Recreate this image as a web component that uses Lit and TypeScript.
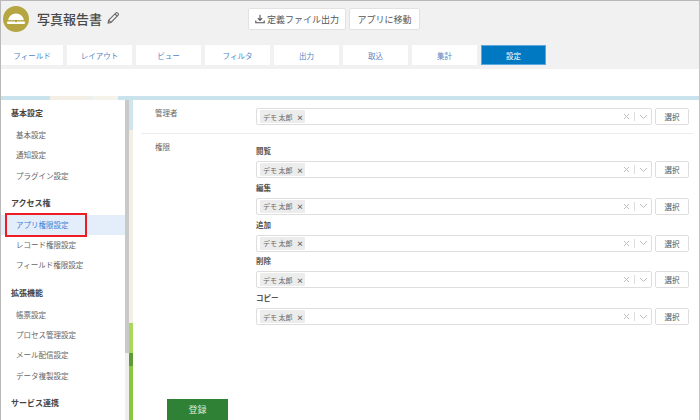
import { LitElement, html, css, svg } from "lit";
import { customElement } from "lit/decorators.js";

const TABS = ["フィールド", "レイアウト", "ビュー", "フィルタ", "出力", "取込", "集計", "設定"];
const NAV: { title: string; items: string[] }[] = [
  { title: "基本設定", items: ["基本設定", "通知設定", "プラグイン設定"] },
  { title: "アクセス権", items: ["アプリ権限設定", "レコード権限設定", "フィールド権限設定"] },
  { title: "拡張機能", items: ["帳票設定", "プロセス管理設定", "メール配信設定", "データ複製設定"] },
  { title: "サービス連携", items: [] },
];
const PERMS = ["閲覧", "編集", "追加", "削除", "コピー"];

@customElement("app-root")
export class AppRoot extends LitElement {
  static styles = css`
    :host {
      display: block;
      width: 700px;
      height: 420px;
      overflow: hidden;
      box-sizing: border-box;
      border-top: 1px solid #b9b9b9;
      border-left: 1px solid #b9b9b9;
      border-right: 1px solid #c4c4c4;
      font-family: "Noto Sans CJK JP", "Liberation Sans", sans-serif;
      font-size: 8px;
      color: #555;
      background: #fff;
    }
    .top { height: 68px; background: #f1f1f1; box-sizing: border-box; padding: 5px 0 0 2px; }
    .head { display: flex; align-items: flex-start; height: 39px; }
    .logo { width: 26px; height: 26px; flex: none; display: block; }
    .title { margin: 3px 0 0 8px; font-size: 13px; line-height: 20px; font-weight: 500; color: #4a4a4a; width: 64px; white-space: nowrap; }
    .pencil { width: 14px; height: 14px; margin: 5px 0 0 5px; flex: none; }
    .actions { display: flex; gap: 3px; margin: 2px 0 0 128px; }
    .btn {
      height: 22px; box-sizing: border-box; display: flex; align-items: center; justify-content: center;
      background: #fff; border: 1px solid #e2e2e2; border-radius: 2px; font-size: 9px; color: #555; white-space: nowrap;
    }
    .b1 { width: 98px; gap: 2px; }
    .b2 { width: 71px; }
    .dl { width: 10px; height: 10px; }
    .tabs { display: flex; gap: 4px; margin-left: -2px; }
    .tab {
      width: 65px; height: 20px; background: #fff; color: #4f86c6; display: flex; align-items: center; justify-content: center;
      font-size: 7.5px; box-sizing: border-box;
    }
    .tab:first-child { width: 62px; }
    .tab.on { background: #0079c2; color: #fff; border: 1px solid #5aa9dc; }
    .gap { height: 27px; background: #fff; }
    .strip { height: 4px; background: linear-gradient(90deg, #c9e2ec 0 49px, #f3efe4 49px 88px, #e8f2f4 88px 92px, #f6f3ea 92px 117px, #c9e2ec 117px); }
    .body { display: flex; height: 320px; }
    .side { width: 124px; flex: none; background: #fff; box-sizing: border-box; overflow: hidden; padding-top: 6px; }
    .sec { font-weight: 700; font-size: 8px; line-height: 14px; height: 14px; padding-left: 10px; color: #444; margin-top: 10px; margin-bottom: 5px; }
    .sec:first-child { margin-top: 0; }
    .item { height: 20.3px; line-height: 20.3px; padding-left: 15px; color: #666; font-size: 7.5px; white-space: nowrap; box-sizing: border-box; }
    .item.on { position: relative; background: #e4eefb; color: #3f7fd6; }
    .mark { position: absolute; left: 4px; top: -2px; width: 82px; height: 24px; border: 2px solid #ee1c25; box-sizing: border-box; }
    .scroll { width: 4px; flex: none; background: linear-gradient(#c9c9c9 0 253px, #eee 253px); }
    .deco { width: 4px; flex: none; background: linear-gradient(#cfe5ee 0 30px, #f3efe4 30px 223px, #a9d85a 223px 253px, #5f9a35 253px 266px, #8cc63f 266px); }
    .main { flex: 1; min-width: 0; background: #fff; box-sizing: border-box; padding: 8px 0 0 8px; position: relative; }
    .row { display: flex; }
    .lab { width: 115px; padding-left: 14px; box-sizing: border-box; flex: none; color: #666; font-size: 7.5px; line-height: 10px; }
    .r1 { height: 25px; border-bottom: 1px solid #ececec; margin-right: 6px; }
    .r2 { padding-top: 8px; }
    .perms { flex: 1; padding-top: 3px; }
    .plab { height: 11px; line-height: 11px; font-size: 7.5px; font-weight: 700; color: #555; margin-bottom: 5px; }
    .pick { display: flex; gap: 3px; height: 17px; width: 433px; margin-bottom: 3.75px; }
    .sel {
      width: 396px; height: 17px; box-sizing: border-box; border: 1px solid #dedede; border-radius: 2px; background: #fff;
      display: flex; align-items: center; padding: 0 3px;
    }
    .chip {
      height: 13px; width: 45px; background: #ececec; border-radius: 1px; display: flex; align-items: center; padding-left: 3px; gap: 4px;
      font-size: 7px; color: #666; box-sizing: border-box; white-space: nowrap;
    }
    .chip b { font-size: 7px; line-height: 8px; font-weight: 700; color: #555; }
    .ctl { margin-left: auto; display: flex; align-items: center; gap: 4px; color: #bbb; }
    .ctl svg { display: block; }
    .sep { width: 1px; height: 9px; background: #ddd; }
    .pb {
      width: 34px; height: 17px; box-sizing: border-box; border: 1px solid #dedede; border-radius: 2px; background: #fff; font-size: 7.5px; color: #555;
      display: flex; align-items: center; justify-content: center; flex: none;
    }
    .r1 .pick { margin: 0; }
    .save {
      position: absolute; left: 34px; bottom: 0; width: 61px; height: 21px; background: #2f8135; color: #d9ead9;
      font-size: 9px; display: flex; align-items: center; justify-content: center;
    }
  `;

  private picker() {
    return html`<div class="pick">
      <div class="sel">
        <div class="chip"><span>デモ 太郎</span><b>×</b></div>
        <div class="ctl">
          <svg width="7" height="7" viewBox="0 0 7 7" fill="none" stroke="#bdbdbd" stroke-width="1"><path d="M1 1l5 5M6 1l-5 5"/></svg>
          <div class="sep"></div>
          <svg width="9" height="6" viewBox="0 0 9 6" fill="none" stroke="#bdbdbd" stroke-width="1"><path d="M1 1l3.5 3.5L8 1"/></svg>
        </div>
      </div>
      <div class="pb">選択</div>
    </div>`;
  }

  render() {
    const logo = svg`<circle cx="13" cy="13" r="13" fill="#b5a642"/>
      <path d="M5 15a8 7.5 0 0 1 16 0z" fill="#fff"/>
      <rect x="4" y="15.5" width="18" height="2.5" rx="1" fill="#fff"/>
      <rect x="5" y="14" width="16" height=".9" fill="#b5a642"/>
      <circle cx="13" cy="15" r="1.2" fill="#b5a642"/>`;
    return html`
      <div class="top">
        <div class="head">
          <svg class="logo" viewBox="0 0 26 26">${logo}</svg>
          <div class="title">写真報告書</div>
          <svg class="pencil" viewBox="0 0 14 14" fill="none" stroke="#6a6a6a" stroke-width="1.1" stroke-linejoin="round">
            <path d="M2 12.2l.7-3L10 1.9a1 1 0 0 1 1.4 0l.8.8a1 1 0 0 1 0 1.4L4.9 11.5z"/>
            <path d="M9 3l2.2 2.2M2.7 9.2l2.2 2.3"/>
          </svg>
          <div class="actions">
            <div class="btn b1">
              <svg class="dl" viewBox="0 0 10 10" fill="none" stroke="#555" stroke-width="1.1"><path d="M5 .8v5.4M2.8 4.2L5 6.4l2.2-2.2M.8 6.5v2.2h8.4V6.5"/></svg>
              <span>定義ファイル出力</span>
            </div>
            <div class="btn b2">アプリに移動</div>
          </div>
        </div>
        <div class="tabs">
          ${TABS.map((t, i) => html`<div class="tab ${i === 7 ? "on" : ""}">${t}</div>`)}
        </div>
      </div>
      <div class="gap"></div>
      <div class="strip"></div>
      <div class="body">
        <div class="side">
          ${NAV.map(
            (s) => html`<div class="sec">${s.title}</div>
              ${s.items.map((it) =>
                it === "アプリ権限設定"
                  ? html`<div class="item on">${it}<div class="mark"></div></div>`
                  : html`<div class="item">${it}</div>`
              )}`
          )}
        </div>
        <div class="scroll"></div>
        <div class="deco"></div>
        <div class="main">
          <div class="row r1"><div class="lab">管理者</div>${this.picker()}</div>
          <div class="row r2">
            <div class="lab">権限</div>
            <div class="perms">
              ${PERMS.map((p) => html`<div class="plab">${p}</div>${this.picker()}`)}
            </div>
          </div>
          <div class="save">登録</div>
        </div>
      </div>
    `;
  }
}
